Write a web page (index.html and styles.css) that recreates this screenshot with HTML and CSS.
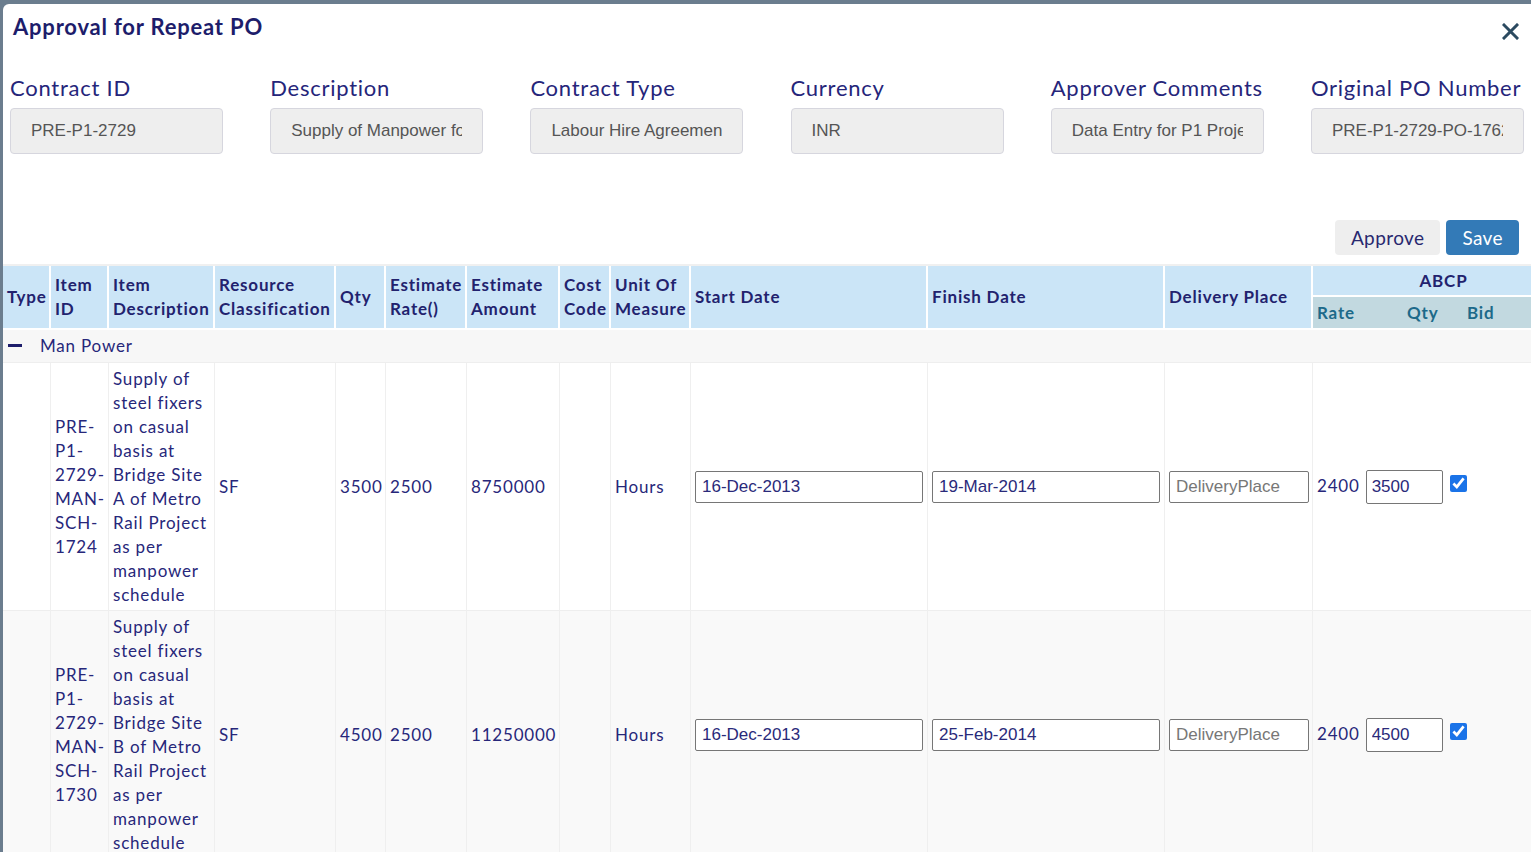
FILE: index.html
```html
<!DOCTYPE html>
<html lang="en">
<head>
<meta charset="utf-8">
<title>Approval for Repeat PO</title>
<link rel="stylesheet" href="styles.css">
</head>
<body>
<div class="modal">
  <div class="modal-head">
    <h1 class="title">Approval for Repeat PO</h1>
    <button class="close" aria-label="Close">
      <svg width="17" height="17" viewBox="0 0 17 17"><path d="M2 2 L15 15 M15 2 L2 15" stroke="#2b4a60" stroke-width="3" stroke-linecap="square" fill="none"/></svg>
    </button>
  </div>

  <div class="fields">
    <div class="field"><label class="flabel">Contract ID</label><input class="ro" value="PRE-P1-2729" readonly></div>
    <div class="field"><label class="flabel">Description</label><input class="ro" value="Supply of Manpower for Bridge Sites" readonly></div>
    <div class="field"><label class="flabel">Contract Type</label><input class="ro" value="Labour Hire Agreement" readonly></div>
    <div class="field"><label class="flabel">Currency</label><input class="ro" value="INR" readonly></div>
    <div class="field"><label class="flabel">Approver Comments</label><input class="ro" value="Data Entry for P1 Project" readonly></div>
    <div class="field"><label class="flabel">Original PO Number</label><input class="ro" value="PRE-P1-2729-PO-1762" readonly></div>
  </div>

  <div class="actions">
    <button class="btn btn-default">Approve</button>
    <button class="btn btn-primary">Save</button>
  </div>

  <table class="grid">
    <colgroup>
      <col class="c-type"><col class="c-id"><col class="c-desc"><col class="c-res"><col class="c-qty"><col class="c-rate"><col class="c-amt"><col class="c-cost"><col class="c-uom"><col class="c-date"><col class="c-date"><col class="c-place"><col class="c-arate"><col class="c-aqty"><col class="c-abid">
    </colgroup>
    <thead>
      <tr class="h1">
        <th rowspan="2">Type</th>
        <th rowspan="2">Item ID</th>
        <th rowspan="2">Item Description</th>
        <th rowspan="2">Resource Classification</th>
        <th rowspan="2">Qty</th>
        <th rowspan="2">Estimate Rate()</th>
        <th rowspan="2">Estimate Amount</th>
        <th rowspan="2">Cost Code</th>
        <th rowspan="2">Unit Of Measure</th>
        <th rowspan="2">Start Date</th>
        <th rowspan="2">Finish Date</th>
        <th rowspan="2">Delivery Place</th>
        <th colspan="3" class="abcp">ABCP</th>
      </tr>
      <tr class="h2">
        <th class="sub">Rate</th>
        <th class="sub">Qty</th>
        <th class="sub">Bid</th>
      </tr>
    </thead>
    <tbody>
      <tr class="group">
        <td colspan="15"><span class="minus"></span>Man Power</td>
      </tr>
      <tr class="row">
        <td></td>
        <td>PRE-P1-2729-MAN-SCH-1724</td>
        <td>Supply of steel fixers on casual basis at Bridge Site A of Metro Rail Project as per manpower schedule</td>
        <td>SF</td>
        <td>3500</td>
        <td>2500</td>
        <td>8750000</td>
        <td></td>
        <td>Hours</td>
        <td><input class="cell-in date-in" value="16-Dec-2013"></td>
        <td><input class="cell-in date-in" value="19-Mar-2014"></td>
        <td><input class="cell-in place-in" placeholder="DeliveryPlace"></td>
        <td colspan="3" class="abcp-cell"><span class="arate">2400</span><input class="cell-in qty-in" value="3500"><input type="checkbox" class="bid" checked></td>
      </tr>
      <tr class="row alt">
        <td></td>
        <td>PRE-P1-2729-MAN-SCH-1730</td>
        <td>Supply of steel fixers on casual basis at Bridge Site B of Metro Rail Project as per manpower schedule</td>
        <td>SF</td>
        <td>4500</td>
        <td>2500</td>
        <td>11250000</td>
        <td></td>
        <td>Hours</td>
        <td><input class="cell-in date-in" value="16-Dec-2013"></td>
        <td><input class="cell-in date-in" value="25-Feb-2014"></td>
        <td><input class="cell-in place-in" placeholder="DeliveryPlace"></td>
        <td colspan="3" class="abcp-cell"><span class="arate">2400</span><input class="cell-in qty-in" value="4500"><input type="checkbox" class="bid" checked></td>
      </tr>
    </tbody>
  </table>
</div>
</body>
</html>
```

FILE: styles.css
```css
* { box-sizing: border-box; }

html, body {
  margin: 0;
  height: 100%;
}

body {
  background: #6b7d8e;
  overflow: hidden;
  font-family: "Lato", "Liberation Sans", sans-serif;
  color: #26266f;
}

.modal {
  margin: 4px 0 0 3px;
  background: #ffffff;
  border-radius: 6px 0 0 0;
  min-height: 848px;
  width: 1600px;
}

.modal-head {
  display: flex;
  justify-content: space-between;
  align-items: flex-start;
  width: 1528px;
  padding: 10px 12px 0 10px;
}

.title {
  margin: 0;
  font-size: 22px;
  line-height: 26px;
  font-weight: 700;
  color: #1d1d6b;
  letter-spacing: 0.8px;
}

.close {
  margin-top: 9px;
  padding: 0;
  border: 0;
  background: transparent;
  width: 17px;
  height: 17px;
  display: flex;
}

.fields {
  display: grid;
  grid-template-columns: repeat(6, 213px);
  column-gap: 47.2px;
  padding-left: 7px;
  margin-top: 35px;
}

.flabel {
  display: block;
  font-size: 22px;
  line-height: 26px;
  color: #25257a;
  letter-spacing: 0.75px;
  margin-bottom: 7px;
  white-space: nowrap;
}

.ro {
  display: block;
  width: 213px;
  height: 46px;
  padding: 0 20px;
  border: 1px solid #d6d6de;
  border-radius: 4px;
  background: #eeeeee;
  font-family: "Liberation Sans", Arial, sans-serif;
  font-size: 17px;
  color: #555555;
  outline: none;
}

.actions {
  display: flex;
  justify-content: flex-end;
  gap: 6px;
  width: 1516px;
  margin-top: 66px;
}

.btn {
  height: 35px;
  padding: 0 16px;
  border: 0;
  border-radius: 4px;
  font-family: "Lato", sans-serif;
  font-size: 19px;
  letter-spacing: 0.4px;
}

.btn-default {
  background: #eeeeee;
  color: #28286f;
}

.btn-primary {
  background: #337ab7;
  color: #ffffff;
}

.grid {
  margin-top: 9px;
  border-collapse: separate;
  border-spacing: 0;
  table-layout: fixed;
  width: 1564px;
  border-top: 2px solid #f0f0f0;
  font-size: 17px;
  letter-spacing: 0.8px;
  color: #27277a;
}

.c-type { width: 48px; }
.c-id { width: 58px; }
.c-desc { width: 106px; }
.c-res { width: 121px; }
.c-qty { width: 50px; }
.c-rate { width: 81px; }
.c-amt { width: 93px; }
.c-cost { width: 51px; }
.c-uom { width: 80px; }
.c-date { width: 237px; }
.c-place { width: 148px; }
.c-arate { width: 90px; }
.c-aqty { width: 60px; }
.c-abid { width: 111px; }

.grid th {
  background: #cbe5f7;
  color: #22226e;
  font-weight: 700;
  text-align: left;
  vertical-align: middle;
  padding: 0 4px;
  line-height: 24px;
  border-right: 2px solid #ffffff;
  border-bottom: 2px solid #ffffff;
}

.grid .h1 th { height: 31px; }
.grid .h2 th { height: 33px; }

.grid th.abcp {
  text-align: center;
  border-right: 0;
}

.grid th.sub {
  background: #c2d9e0;
  color: #1d6a8a;
  border-right: 0;
}

.grid td {
  padding: 0 4px;
  line-height: 24px;
  vertical-align: middle;
  border-right: 1px solid #efefef;
  border-bottom: 1px solid #eeeeee;
}

.grid tr.group td {
  background: #f7f7f7;
  height: 33px;
  padding-left: 5px;
  border-right: 0;
}

.minus {
  display: inline-block;
  width: 14px;
  height: 3px;
  background: #1d1d6b;
  vertical-align: middle;
  margin: 0 18px 4px 0;
}

.grid tr.row td {
  height: 248px;
  padding-top: 2px;
  padding-bottom: 2px;
}

.grid tr.alt td { background: #f9f9f9; }

.cell-in {
  height: 32px;
  padding: 0 6px;
  border: 1px solid #767676;
  border-radius: 2px;
  background: #ffffff;
  font-family: "Liberation Sans", Arial, sans-serif;
  font-size: 17px;
  letter-spacing: 0;
  color: #2a2a7a;
  vertical-align: middle;
}

.cell-in::placeholder { color: #777777; }

.date-in { width: 228px; }
.place-in { width: 140px; }

.abcp-cell { white-space: nowrap; }

.arate { margin-right: 6px; }

.qty-in {
  width: 77px;
  height: 34px;
  padding: 0 5px;
  vertical-align: baseline;
}

.bid {
  width: 17px;
  height: 17px;
  margin: 0 0 0 7px;
  vertical-align: baseline;
  accent-color: #1a73e8;
}
```
